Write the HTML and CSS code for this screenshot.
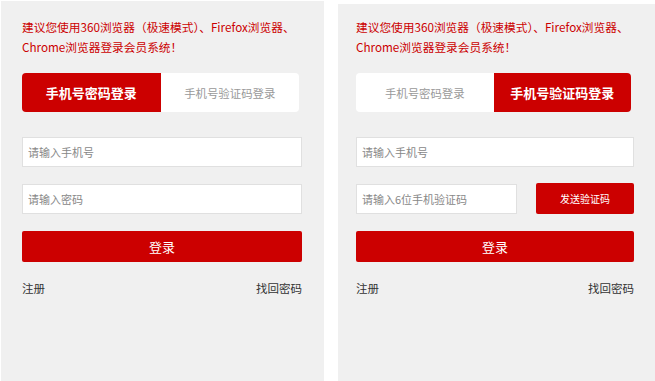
FILE: index.html
```html
<html>
<head>
    <title>会员登录</title>
    <link rel="stylesheet" href="styles.css">
</head>
<body>
    <div class="page">
        <div class="panel panel-pwd">
            <p class="tip">建议您使用360浏览器（极速模式）、Firefox浏览器、<br>Chrome浏览器登录会员系统！</p>
            <div class="tabs">
                <a class="tab active">手机号密码登录</a>
                <a class="tab">手机号验证码登录</a>
            </div>
            <form class="form">
                <input class="field" type="text" placeholder="请输入手机号">
                <input class="field" type="password" placeholder="请输入密码">
                <button class="submit" type="button">登录</button>
            </form>
            <div class="links">
                <a href="#">注册</a>
                <a href="#">找回密码</a>
            </div>
        </div>
        <div class="panel panel-code">
            <p class="tip">建议您使用360浏览器（极速模式）、Firefox浏览器、<br>Chrome浏览器登录会员系统！</p>
            <div class="tabs">
                <a class="tab">手机号密码登录</a>
                <a class="tab active">手机号验证码登录</a>
            </div>
            <form class="form">
                <input class="field" type="text" placeholder="请输入手机号">
                <div class="code-row">
                    <input class="field code" type="text" placeholder="请输入6位手机验证码">
                    <button class="send" type="button">发送验证码</button>
                </div>
                <button class="submit" type="button">登录</button>
            </form>
            <div class="links">
                <a href="#">注册</a>
                <a href="#">找回密码</a>
            </div>
        </div>
    </div>
</body>
</html>
```

FILE: styles.css
```css
body { margin: 0; background: #fff; font-family: "Noto Sans CJK SC", "Microsoft YaHei", sans-serif; }
.page { display: flex; height: 381px; }
.panel { background: #f0f0f0; box-sizing: border-box; }
.panel-pwd { width: 323px; margin: 1px 0 0 1px; padding: 16px 22px 0 21px; }
.panel-code { flex: 1; margin: 4px 0 0 14px; padding: 13px 21px 0 18px; }
.tip { margin: 0; font-size: 11.7px; line-height: 20px; color: #cc0000; white-space: nowrap; }
.tabs { display: flex; height: 39px; margin: 16px 3px 0 0; }
.tab { flex: 1; display: flex; align-items: center; justify-content: center; background: #fff; color: #999; font-size: 11.4px; }
.tab:first-child { border-radius: 4px 0 0 4px; }
.tab:last-child { border-radius: 0 4px 4px 0; }
.tab.active { background: #cc0000; color: #fff; font-size: 13px; font-weight: bold; }
.form { display: flex; flex-direction: column; gap: 17px; margin: 25px 0 0; }
.field { height: 30px; box-sizing: border-box; border: 1px solid #e0e0e0; background: #fff; padding: 0 5px; font-family: inherit; font-size: 11px; outline: none; }
.field::placeholder { color: #888; }
.code-row { display: flex; align-items: center; }
.code { width: 161px; }
.send { flex: 1; height: 31px; margin: -1px 0 0 19px; border: none; border-radius: 2px; background: #cc0000; color: #fff; font-family: inherit; font-size: 10px; }
.submit { height: 31px; border: none; border-radius: 2px; background: #cc0000; color: #fff; font-family: inherit; font-size: 13px; }
.links { display: flex; justify-content: space-between; margin-top: 16px; line-height: 20px; font-size: 11.5px; }
.links a { color: #333; text-decoration: none; }
```
